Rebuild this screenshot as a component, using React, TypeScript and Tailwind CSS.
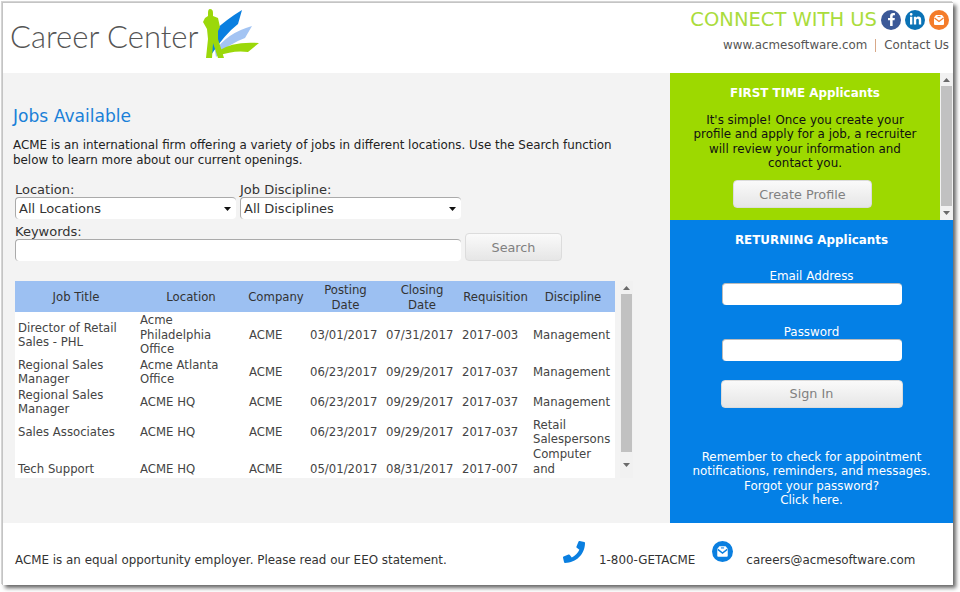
import React from 'react';
import { FaFacebookF, FaLinkedinIn, FaPhoneAlt } from 'react-icons/fa';

const jobs = [
  { title: 'Director of Retail Sales - PHL', location: 'Acme Philadelphia Office', posted: '03/01/2017', closing: '07/31/2017', req: '2017-003', discipline: 'Management', rowClass: 'h-[44px]', disciplineClass: '' },
  { title: 'Regional Sales Manager', location: 'Acme Atlanta Office', posted: '06/23/2017', closing: '09/29/2017', req: '2017-037', discipline: 'Management', rowClass: 'h-[30px]', disciplineClass: '' },
  { title: 'Regional Sales Manager', location: 'ACME HQ', posted: '06/23/2017', closing: '09/29/2017', req: '2017-037', discipline: 'Management', rowClass: 'h-[30px]', disciplineClass: '' },
  { title: 'Sales Associates', location: 'ACME HQ', posted: '06/23/2017', closing: '09/29/2017', req: '2017-037', discipline: 'Retail Salespersons', rowClass: 'h-[30px]', disciplineClass: '' },
  { title: 'Tech Support', location: 'ACME HQ', posted: '05/01/2017', closing: '08/31/2017', req: '2017-007', discipline: 'Computer and', rowClass: 'h-[44px]', disciplineClass: 'self-start w-[70px]' },
];

const gridCols = 'grid grid-cols-[122px_108px_62px_77px_76px_71px_84px]';

const GrayButton = ({ label, className }: { label: string; className: string }) => (
  <button className={`rounded-[4px] border border-[#dcdcdc] bg-gradient-to-b from-[#fafafa] to-[#e6e6e6] text-[12.8px] text-[#808080] ${className}`}>
    {label}
  </button>
);

const Arrow = ({ down, fill = '#6a6a6a' }: { down?: boolean; fill?: string }) => (
  <svg width="7" height="4" viewBox="0 0 7 4" className="shrink-0">
    <path d={down ? 'M0 0h7L3.5 4z' : 'M0 4h7L3.5 0z'} fill={fill} />
  </svg>
);

const MailIcon = ({ bg, size }: { bg: string; size: number }) => (
  <svg width={size} height={size} viewBox="0 0 20 20">
    <circle cx="10" cy="10" r="10" fill={bg} />
    <path d="M5 7.5 7 5h6l2 2.5V14a1 1 0 0 1-1 1H6a1 1 0 0 1-1-1z" fill="#fff" />
    <path d="M5.5 8 10 11.5 14.5 8" fill="none" stroke={bg} strokeWidth="1.3" />
    <path d="M8.5 6.6h3" stroke={bg} strokeWidth="1" />
  </svg>
);

const Logo = () => (
  <svg width="58" height="52" viewBox="0 0 58 52" className="ml-[5px]">
    <path d="M39 1 L35 15 Q22 25 8 46 L11 22 Q24 10 39 1Z" fill="#0a7fe0" />
    <path d="M49 17 L42 29 Q25 35 13 48 L12 42 Q24 24 49 17Z" fill="#a3c4f3" />
    <path d="M56 34 L45 43 Q30 41 15 47 L15 42 Q30 32 56 34Z" fill="#9bd80a" />
    <path d="M7 0 Q10 0 10 4 L10 7 L15 9 L17 18 L15 22 L15 30 L21 49 L15 49 L10 34 L9 49 L3 49 L5 30 L4 20 L0 13 L2 9 L5 7 L5 4 Q5 0 7 0Z" fill="#9bd80a" />
  </svg>
);

const JobRow = ({ job }: { job: (typeof jobs)[number] }) => (
  <div className={`${gridCols} ${job.rowClass} items-center text-[#444]`}>
    <div className="pl-[3px] pr-[6px]">{job.title}</div>
    <div className="pl-[3px] pr-[18px]">{job.location}</div>
    <div className="pl-[4px]">ACME</div>
    <div className="pl-[3px]">{job.posted}</div>
    <div className="pl-[2px]">{job.closing}</div>
    <div className="pl-[2px]">{job.req}</div>
    <div className={`pl-[2px] ${job.disciplineClass}`}>{job.discipline}</div>
  </div>
);

export default function App() {
  return (
    <div className="h-[592px] w-[960px] overflow-hidden bg-white font-['DejaVu_Sans',Verdana,sans-serif]">
      <div className="ml-[2px] mt-[2px] h-[583px] w-[951px] border-l border-t border-[#c4c4c4] bg-white shadow-[-1px_-1px_0_#d4d4d4,3px_3px_4px_rgba(0,0,0,0.6)]">
        {/* Header */}
        <header className="flex h-[70px] justify-between">
          <div className="flex items-start pl-[7px] pt-[6px]">
            <h1 className="mt-[8px] font-['Lato',sans-serif] text-[31px] font-light leading-[38px] text-[#555]">Career Center</h1>
            <Logo />
          </div>
          <div className="flex flex-col items-end pr-[4px] pt-[5px]">
            <div className="flex items-center gap-[4px]">
              <span className="mt-[1px] text-[19.5px] leading-[22px] text-[#aadc3c]">CONNECT WITH US</span>
              <span className="flex h-[20px] w-[20px] items-center justify-center rounded-full bg-[#3b5998] text-[13px] text-white"><FaFacebookF /></span>
              <span className="flex h-[20px] w-[20px] items-center justify-center rounded-full bg-[#0a72b5] text-[13px] text-white"><FaLinkedinIn /></span>
              <MailIcon bg="#f47c2a" size={20} />
            </div>
            <div className="mt-[6px] flex items-center text-[11.85px] text-[#555]">
              <span>www.acmesoftware.com</span>
              <span className="mx-[8px] h-[13px] w-px bg-[#d8a888]" />
              <span>Contact Us</span>
            </div>
          </div>
        </header>

        <div className="flex h-[450px]">
          {/* Main column */}
          <main className="w-[667px] bg-[#f3f3f3] pl-[10px] pt-[32px]">
            <h2 className="text-[17.1px] leading-[22px] text-[#1a80d8]">Jobs Available</h2>
            <p className="mt-[11px] w-[610px] text-[11.9px] leading-[14.5px] text-[#222]">
              ACME is an international firm offering a variety of jobs in different locations. Use the Search function below to learn more about our current openings.
            </p>
            <div className="ml-[2px] mt-[15px] text-[13px] leading-[15px] text-[#333]">
              <div className="flex gap-[4px]">
                <div className="w-[221px]">
                  <div>Location:</div>
                  <div className="flex h-[22px] items-center justify-between rounded-[4px] border-l border-t border-[#aaa] bg-white pl-[3px] pr-[5px]">
                    <span>All Locations</span>
                    <Arrow down fill="#111" />
                  </div>
                </div>
                <div className="w-[221px]">
                  <div>Job Discipline:</div>
                  <div className="flex h-[22px] items-center justify-between rounded-[4px] border-l border-t border-[#aaa] bg-white pl-[3px] pr-[5px]">
                    <span>All Disciplines</span>
                    <Arrow down fill="#111" />
                  </div>
                </div>
              </div>
              <div className="mt-[5px] flex items-end gap-[4px]">
                <div className="w-[446px]">
                  <div>Keywords:</div>
                  <div className="h-[22px] rounded-[4px] border-l border-t border-[#aaa] bg-white" />
                </div>
                <GrayButton label="Search" className="h-[28px] w-[97px]" />
              </div>
            </div>

            {/* Jobs table */}
            <div className="ml-[2px] mt-[20px] flex h-[197px] w-[618px] text-[11.7px] leading-[14.5px]">
              <div className="w-[600px] bg-white">
                <div className={`${gridCols} h-[31px] items-center bg-[#9cc0f2] pt-[2px] text-center text-[#333]`}>
                  <div>Job Title</div>
                  <div>Location</div>
                  <div>Company</div>
                  <div className="px-[14px]">Posting Date</div>
                  <div className="px-[14px]">Closing Date</div>
                  <div>Requisition</div>
                  <div>Discipline</div>
                </div>
                <div className="h-[166px] overflow-hidden pt-[1px]">
                  {jobs.map((job, i) => (
                    <JobRow key={i} job={job} />
                  ))}
                </div>
              </div>
              <div className="ml-[5px] flex w-[13px] flex-col items-center bg-[#f1f1f1]">
                <div className="flex h-[13px] items-center"><Arrow /></div>
                <div className="h-[158px] w-[11px] bg-[#c1c1c1]" />
                <div className="flex flex-1 items-center"><Arrow down /></div>
              </div>
            </div>
          </main>

          {/* Right column */}
          <aside className="flex w-[283px] flex-col text-[11.9px] leading-[14.5px]">
            <div className="flex h-[147px]">
              <div className="flex w-[270px] flex-col items-center bg-[#9dd900] pt-[13px] text-center text-[#111]">
                <h3 className="font-bold text-white">FIRST TIME Applicants</h3>
                <p className="mt-[12px] w-[230px]">
                  It's simple! Once you create your profile and apply for a job, a recruiter will review your information and contact you.
                </p>
                <GrayButton label="Create Profile" className="ml-[-5px] mt-[9px] h-[28px] w-[139px] pt-[3px]" />
              </div>
              <div className="flex w-[13px] flex-col items-center bg-[#f1f1f1]">
                <div className="flex h-[13px] items-center"><Arrow /></div>
                <div className="h-[120px] w-[11px] bg-[#c1c1c1]" />
                <div className="flex flex-1 items-center"><Arrow down /></div>
              </div>
            </div>
            <div className="flex flex-1 flex-col items-center bg-[#0480e6] pt-[13px] text-center text-white">
              <h3 className="font-bold">RETURNING Applicants</h3>
              <label className="mt-[21px]">Email Address</label>
              <div className="h-[22px] w-[180px] rounded-[4px] border-l border-t border-[#bbb] bg-white" />
              <label className="mt-[20px]">Password</label>
              <div className="mt-[-1px] h-[22px] w-[180px] rounded-[4px] border-l border-t border-[#bbb] bg-white" />
              <GrayButton label="Sign In" className="mt-[19px] h-[28px] w-[182px] pt-[1px]" />
              <p className="mt-[42px] w-[260px]">
                Remember to check for appointment notifications, reminders, and messages.
                <br />
                Forgot your password?
                <br />
                Click here.
              </p>
            </div>
          </aside>
        </div>

        {/* Footer */}
        <footer className="flex h-[62px] items-start bg-white pl-[12px] text-[11.9px] text-[#333]">
          <span className="mt-[29px] w-[548px]">ACME is an equal opportunity employer. Please read our EEO statement.</span>
          <FaPhoneAlt className="mt-[18px] -scale-x-100 text-[22px] text-[#0a7fe0]" />
          <span className="ml-[14px] mt-[29px]">1-800-GETACME</span>
          <span className="ml-[17px] mt-[18px]"><MailIcon bg="#0a7fe0" size={21} /></span>
          <span className="ml-[13px] mt-[29px]">careers@acmesoftware.com</span>
        </footer>
      </div>
    </div>
  );
}
